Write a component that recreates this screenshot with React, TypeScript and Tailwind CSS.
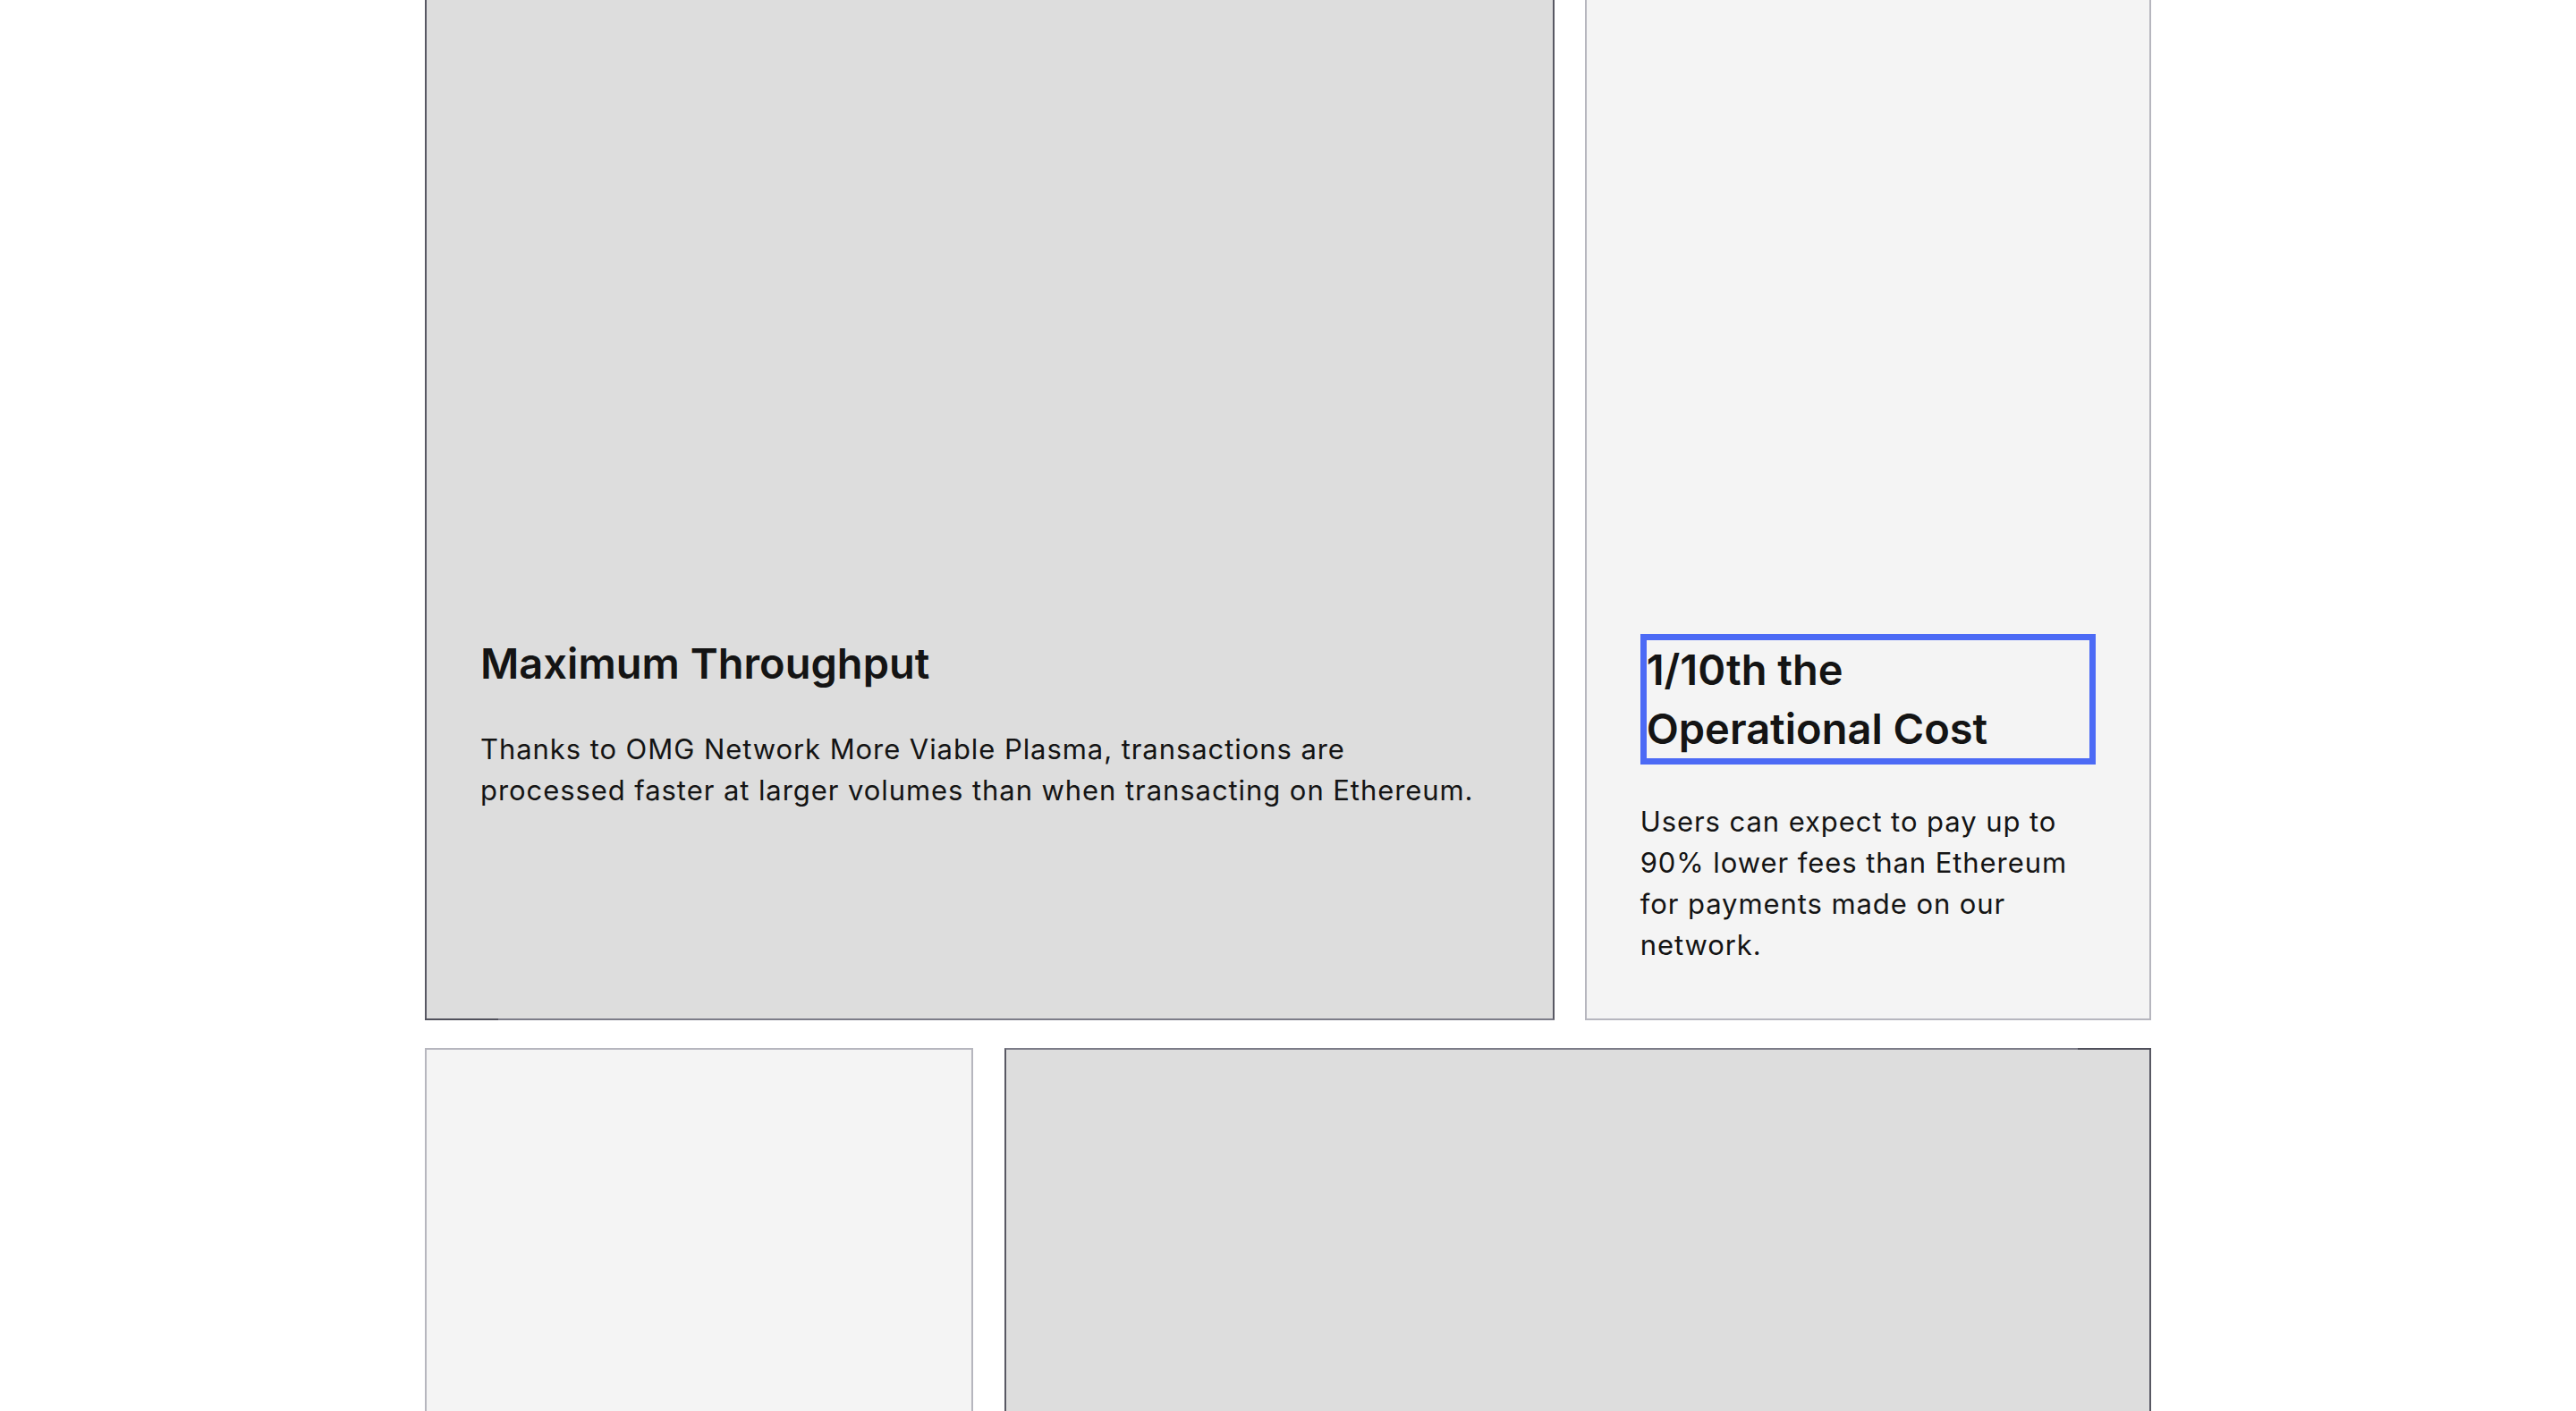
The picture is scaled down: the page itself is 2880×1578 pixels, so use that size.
import React from 'react';

type CardProps = {
  tone: 'dark' | 'light';
  accent?: 'bottom-left' | 'top-right';
  className?: string;
  children?: React.ReactNode;
};

const Card = ({ tone, accent, className = '', children }: CardProps) => {
  const toneClass =
    tone === 'dark'
      ? 'bg-[#dddddd] border-x-[#585863] border-y-[#7c7c88]'
      : 'bg-[#f4f4f4] border-[#b6b6be]';

  return (
    <div className={`relative border-2 ${toneClass} ${className}`}>
      {accent === 'bottom-left' && (
        <span className="absolute -bottom-[2px] -left-[2px] h-[2px] w-[82px] bg-[#50505b]" />
      )}
      {accent === 'top-right' && (
        <span className="absolute -top-[2px] -right-[2px] h-[2px] w-[82px] bg-[#50505b]" />
      )}
      {children}
    </div>
  );
};

const App = () => {
  return (
    <div className="min-h-screen overflow-hidden bg-white font-['Inter','Liberation_Sans',sans-serif] text-[#141414]">
      <div className="mx-auto -mt-[60px] flex w-[1930px] flex-col gap-[31px]">
        <div className="flex h-[1201px] gap-[34px]">
          <Card tone="dark" accent="bottom-left" className="flex-[2_1_0%]">
            <div className="px-[60px] pt-[767px]">
              <h3 className="text-[47px] leading-[66px] font-semibold">
                Maximum Throughput
              </h3>
              <p className="mt-[40px] max-w-[1118px] text-[31px] leading-[46px] tracking-[0.03em]">
                Thanks to OMG Network More Viable Plasma, transactions are
                processed faster at larger volumes than when transacting on
                Ethereum.
              </p>
            </div>
          </Card>

          <Card tone="light" className="flex-[1_1_0%]">
            <div className="px-[60px] pt-[767px]">
              <h3 className="border-[7px] border-[#4c6af5] text-[47px] leading-[66px] font-semibold">
                1/10th the
                <br />
                Operational Cost
              </h3>
              <p className="mt-[41px] text-[31px] leading-[46px] tracking-[0.03em]">
                Users can expect to pay up to 90% lower fees than Ethereum for
                payments made on our network.
              </p>
            </div>
          </Card>
        </div>

        <div className="flex h-[720px] gap-[35px]">
          <Card tone="light" className="w-[613px] shrink-0" />
          <Card tone="dark" accent="top-right" className="flex-1" />
        </div>
      </div>
    </div>
  );
};

export default App;
